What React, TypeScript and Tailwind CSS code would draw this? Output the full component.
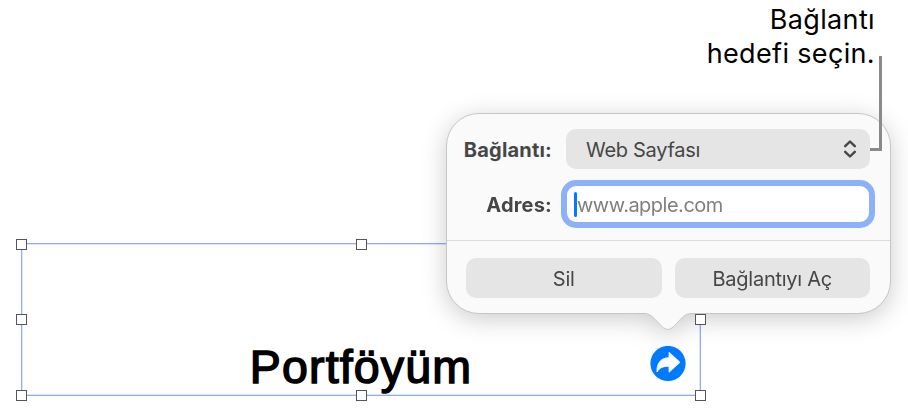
import type { ReactNode } from 'react';

const handles = [
  'left-[-6px] top-[-5px]',
  'left-[334px] top-[-5px]',
  'left-[-6px] top-[70px]',
  'left-[673px] top-[70px]',
  'left-[-6px] top-[146px]',
  'left-[334px] top-[146px]',
  'left-[673px] top-[146px]',
];

function FieldLabel({ children }: { children: ReactNode }) {
  return (
    <span className="w-[105px] shrink-0 pt-0.5 text-right text-[20px] font-bold leading-6 tracking-[0.2px] whitespace-nowrap">
      {children}
    </span>
  );
}

function PopoverButton({ children }: { children: ReactNode }) {
  return (
    <button className="h-10 flex-1 rounded-[10px] bg-[#e5e5e5] pt-0.5 text-[20px] leading-6 tracking-[-0.25px] whitespace-nowrap">
      {children}
    </button>
  );
}

function SelectedTextBox() {
  return (
    <div className="absolute left-[21px] top-[243px] flex h-[153px] w-[680px] items-end justify-center border border-[#8fadf7] shadow-[inset_0_0_0_1px_#dbe5ff]">
      <h1 className="mb-0.5 font-['Liberation_Sans',sans-serif] text-[46.5px] leading-[52px] tracking-[1.15px] text-black [-webkit-text-stroke:1.5px_black]">
        Portföyüm
      </h1>
      {handles.map((position) => (
        <span key={position} className={`absolute z-10 size-[11px] border border-[#555] bg-white ${position}`} />
      ))}
    </div>
  );
}

function LinkBadge() {
  return (
    <svg className="absolute left-[650px] top-[346px] size-9" viewBox="0 0 36 36">
      <circle cx="18" cy="17.5" r="17.6" fill="#007aff" />
      <path
        d="M19 6.2 L30 16.3 L19 26.3 V20.4 C12.5 20.2 9.4 21.9 7 26 C6.6 17.5 10.5 12 19 11.6 Z"
        fill="white"
        stroke="white"
        strokeWidth="0.8"
        strokeLinejoin="round"
      />
    </svg>
  );
}

function LinkPopover() {
  return (
    <div className="absolute left-[446px] top-[113px] h-[201px] w-[445px] text-[#464646] [filter:drop-shadow(0_5px_12px_rgb(0_0_0/0.2))]">
      <div className="flex h-full flex-col rounded-[33px] border border-[#c6c6c6] bg-[#fafafa]">
        <div className="flex items-center pt-[15px]">
          <FieldLabel>Bağlantı:</FieldLabel>
          <div className="ml-3.5 flex h-10 w-[304px] items-center justify-between rounded-[10px] bg-[#e5e5e5] pl-[20px] pr-3.5">
            <span className="pt-0.5 text-[20px] leading-6 tracking-[-0.3px]">Web Sayfası</span>
            <svg className="h-[18px] w-3" viewBox="0 0 12 18" fill="none" stroke="#464646" strokeWidth="2.4" strokeLinecap="round" strokeLinejoin="round">
              <path d="M1.2 6.2 6 1.5l4.8 4.7M1.2 11.8 6 16.5l4.8-4.7" />
            </svg>
          </div>
        </div>
        <div className="mt-[11px] flex items-center">
          <FieldLabel>Adres:</FieldLabel>
          <div className="ml-[9px] flex h-12 w-[314px] items-center rounded-[15px] border-[6px] border-[#8cb1f9] bg-white pl-[7px]">
            <span className="h-[25px] w-[3px] rounded-full bg-[#007aff]" />
            <span className="pt-0.5 text-[20px] leading-6 tracking-[-0.5px] text-[#808080]">www.apple.com</span>
          </div>
        </div>
        <div className="mt-3 h-px shrink-0 bg-[#dadcdf]" />
        <div className="flex gap-[13px] pl-[19px] pr-5 pt-[17px]">
          <PopoverButton>Sil</PopoverButton>
          <PopoverButton>Bağlantıyı Aç</PopoverButton>
        </div>
      </div>
      <svg className="absolute left-[194px] top-[199px] h-5 w-14" viewBox="0 0 56 20">
        <path d="M4 0 V1.5 C10 1.5 13 5 19 11.5 C22 15 25 17.5 27.8 17.5 C30.6 17.5 33.6 15 36.6 11.5 C42.6 5 45 1.5 52 1.5 V0 Z" fill="#fafafa" />
        <path d="M4 1.5 C10 1.5 13 5 19 11.5 C22 15 25 17.5 27.8 17.5 C30.6 17.5 33.6 15 36.6 11.5 C42.6 5 45 1.5 52 1.5" fill="none" stroke="#c6c6c6" />
      </svg>
    </div>
  );
}

function Callout() {
  return (
    <>
      <p className="absolute right-[33px] top-[3px] text-right text-[27px] leading-[34px] tracking-[0.35px] whitespace-nowrap text-black">
        Bağlantı
        <br />
        hedefi seçin.
      </p>
      <div className="absolute left-[870px] top-14 h-[95px] w-3 border-b-[3px] border-r-[3px] border-[#8a8a8a]" />
    </>
  );
}

export default function App() {
  return (
    <div className="relative h-[419px] w-[908px] overflow-hidden bg-white font-['Inter',sans-serif]">
      <SelectedTextBox />
      <LinkPopover />
      <LinkBadge />
      <Callout />
    </div>
  );
}
